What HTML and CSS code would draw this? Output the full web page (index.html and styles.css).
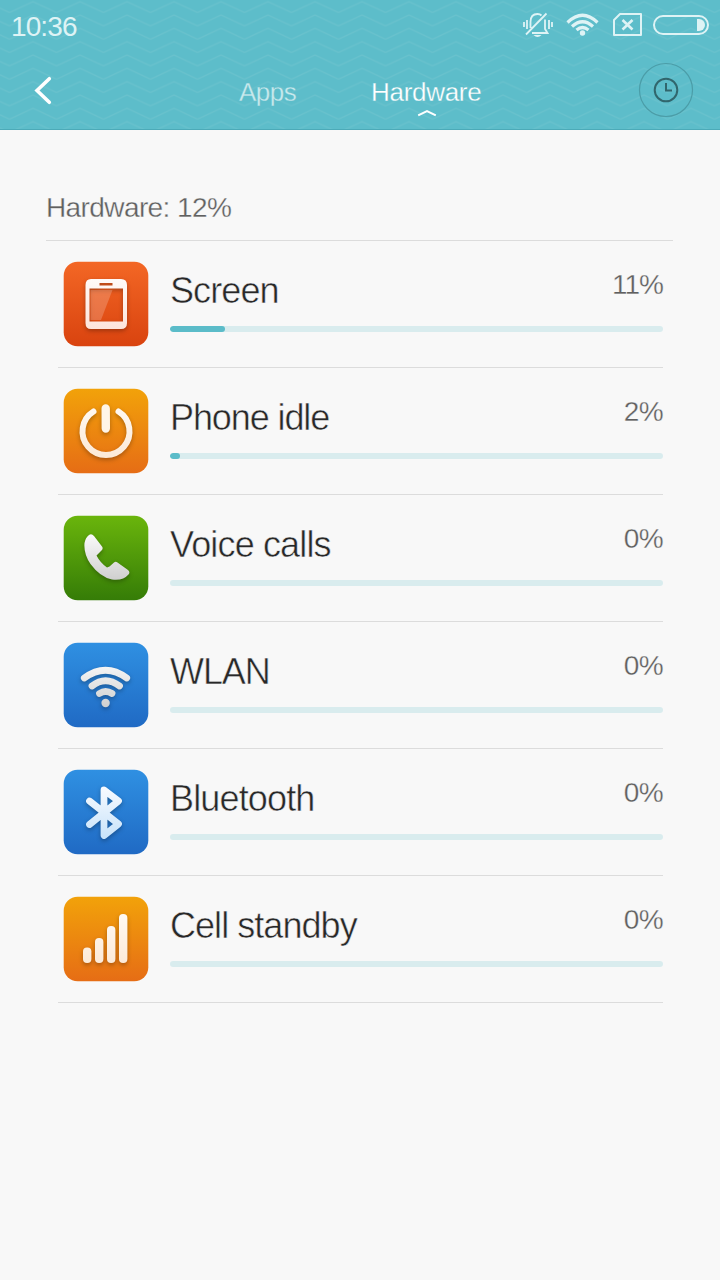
FILE: index.html
```html
<!DOCTYPE html>
<html lang="en">
<head>
<meta charset="utf-8">
<title>Battery usage</title>
<link rel="stylesheet" href="styles.css">
</head>
<body>
<header class="header">
  <svg class="pattern" width="720" height="130" aria-hidden="true">
    <defs>
      <pattern id="waves" x="9.5" y="1.7" width="47" height="13.33" patternUnits="userSpaceOnUse">
        <path d="M0 -2.33L23.5 -13.33L47 -2.33M0 11L23.5 0L47 11M0 24.33L23.5 13.33L47 24.33" fill="none" stroke="#6ac2cd" stroke-width="1.200"/>
      </pattern>
    </defs>
    <rect width="720" height="130" fill="url(#waves)"/>
  </svg>
  <div class="status">
    <span class="time">10:36</span>
    <svg class="status-icons" width="192" height="30" viewBox="520 10 192 30" fill="none" stroke="#def3f5" stroke-width="2">
      <path d="M524 22v5M527 20v9M549 20v9M552 22v5M530.500 28V22C530.500 16 533 14 537.500 14Q540 14 541.500 15.500M545 19.500V29L547.500 33H532M526 34.500L546.500 13.500" stroke-width="1.8"/>
      <path d="M533.500 35h8q-4 3.800-8 0z" fill="#def3f5" stroke="none"/>
      <path d="M567.500 22.500Q582.500 8 597.500 22.500M572 26.500Q582.500 17 593 26.500M576.500 30Q582.500 25 588.500 30" stroke-width="3.200"/>
      <circle cx="582.500" cy="33" r="2.700" fill="#def3f5" stroke="none"/>
      <path d="M620 14H641V35H614V20Z" stroke-linejoin="round"/>
      <path d="M622.500 20L632.500 29.500M632.500 20L622.500 29.500" stroke-width="2.600"/>
      <rect x="654" y="16" width="54" height="18" rx="9"/>
      <path d="M697 19h2a6 6 0 0 1 0 12h-2z" fill="#def3f5" stroke="none"/>
    </svg>
  </div>
  <nav class="nav">
    <svg class="back" width="20" height="30" viewBox="33 75 20 30" fill="none" stroke="#fff" stroke-width="3.600" stroke-linecap="round" stroke-linejoin="miter"><path d="M49.300 78.700L37 90.500L49.300 102.300"/></svg>
    <span class="tab apps">Apps</span>
    <div class="tab-active">
      <span class="tab hardware">Hardware</span>
      <svg class="caret" width="20" height="8" viewBox="0 0 20 8" fill="none" stroke="#fff" stroke-width="2"><path d="M1.200 6.300L10 2L18.800 6.300"/></svg>
    </div>
    <svg class="history" width="56" height="56" viewBox="-28 -28 56 56" fill="none">
      <circle r="26.500" stroke="#4b9da8" stroke-width="1.200"/>
      <circle r="11.300" stroke="#31666d" stroke-width="2"/>
      <path d="M0 -7V.5H6" stroke="#31666d" stroke-width="2"/>
    </svg>
  </nav>
</header>
<main class="content">
  <h1 class="summary">Hardware: 12%</h1>
  <ul class="list">
    <li class="row">
      <svg class="icon" viewBox="0 0 86 86">
        <defs>
          <linearGradient id="red" x2="0" y2="1"><stop stop-color="#f36725"/><stop offset="1" stop-color="#d9430f"/></linearGradient>
          <linearGradient id="orange" x2="0" y2="1"><stop stop-color="#f2a20a"/><stop offset="1" stop-color="#e66d15"/></linearGradient>
          <linearGradient id="green" x2="0" y2="1"><stop stop-color="#6ab50c"/><stop offset="1" stop-color="#357c07"/></linearGradient>
          <linearGradient id="blue" x2="0" y2="1"><stop stop-color="#2f90e2"/><stop offset="1" stop-color="#206ac4"/></linearGradient>
          <linearGradient id="cream" gradientUnits="userSpaceOnUse" x1="0" y1="16" x2="0" y2="70"><stop stop-color="#fffaf4"/><stop offset="1" stop-color="#fce9d6"/></linearGradient>
          <linearGradient id="pink" x2="0" y2="1"><stop stop-color="#fffaf7"/><stop offset="1" stop-color="#fde4dc"/></linearGradient>
          <linearGradient id="silver" gradientUnits="userSpaceOnUse" x1="0" y1="20" x2="0" y2="66"><stop stop-color="#f9f9f9"/><stop offset="1" stop-color="#cecece"/></linearGradient>
          <linearGradient id="ice" gradientUnits="userSpaceOnUse" x1="0" y1="18" x2="0" y2="70"><stop stop-color="#f8fbff"/><stop offset="1" stop-color="#c7e2fa"/></linearGradient>
        </defs>
        <rect x=".7" y=".7" width="84.600" height="84.600" rx="14" fill="url(#red)"/>
        <g class="glyph"><path fill="url(#pink)" fill-rule="evenodd" d="M28 18H58Q64 18 64 24V62Q64 68 58 68H28Q22.500 68 22.500 62V24Q22.500 18 28 18ZM26.500 27.500V60.500H60V27.500ZM36.500 22V24.500H49.500V22Z"/></g>
        <path d="M27.500 29H49.500L38 59H27.500Z" fill="#fff" opacity=".2"/>
      </svg>
      <div class="info"><div class="line"><span class="name screen">Screen</span><span class="percent eleven">11%</span></div><div class="bar"><div class="fill" style="width:55px"></div></div></div>
    </li>
    <li class="row">
      <svg class="icon" viewBox="0 0 86 86">
        <rect x=".7" y=".7" width="84.600" height="84.600" rx="14" fill="url(#orange)"/>
        <g class="glyph" fill="none" stroke="url(#cream)" stroke-linecap="round"><path stroke-width="6" d="M30.500 23.500A23.500 23.500 0 1 0 55.500 23.500"/><path stroke="#fff5e8" stroke-width="8.400" d="M42.700 20.500L42.800 40.500"/></g>
      </svg>
      <div class="info"><div class="line"><span class="name idle">Phone idle</span><span class="percent">2%</span></div><div class="bar"><div class="fill" style="width:10px"></div></div></div>
    </li>
    <li class="row">
      <svg class="icon" viewBox="0 0 86 86">
        <rect x=".7" y=".7" width="84.600" height="84.600" rx="14" fill="url(#green)"/>
        <g class="glyph"><path fill="url(#silver)" d="M26 20Q28.500 18 31 21L39 31.500Q40.500 33.500 38.500 35.500L33.500 40.500Q37 47.500 44 52.500L46.500 51.500L51 47.500Q52.500 46 54.500 47.500L65 55Q67.500 57 65.500 59.500Q60 66 49 64.500Q37 62 27.500 49Q20.500 38.500 21.500 28Q22.500 22.500 26 20Z"/></g>
      </svg>
      <div class="info"><div class="line"><span class="name voice">Voice calls</span><span class="percent">0%</span></div><div class="bar"></div></div>
    </li>
    <li class="row">
      <svg class="icon" viewBox="0 0 86 86">
        <rect x=".7" y=".7" width="84.600" height="84.600" rx="14" fill="url(#blue)"/>
        <g class="glyph"><path fill="none" stroke="url(#silver)" stroke-width="6.800" stroke-linecap="round" d="M21.300 36Q42.500 20.500 63.700 36M29 44Q42.500 33.500 56.500 44M36.500 51.500Q42.500 47.500 49 51.500"/><circle cx="42.600" cy="61" r="4.200" fill="url(#silver)"/></g>
      </svg>
      <div class="info"><div class="line"><span class="name wlan">WLAN</span><span class="percent">0%</span></div><div class="bar"></div></div>
    </li>
    <li class="row">
      <svg class="icon" viewBox="0 0 86 86">
        <rect x=".7" y=".7" width="84.600" height="84.600" rx="14" fill="url(#blue)"/>
        <g class="glyph"><path fill="none" stroke="url(#ice)" stroke-width="6.800" stroke-linecap="round" stroke-linejoin="round" d="M26.500 32L55.500 55L41 66.500V21L55.500 32L26.500 55.500"/></g>
      </svg>
      <div class="info"><div class="line"><span class="name bluetooth">Bluetooth</span><span class="percent">0%</span></div><div class="bar"></div></div>
    </li>
    <li class="row">
      <svg class="icon" viewBox="0 0 86 86">
        <rect x=".7" y=".7" width="84.600" height="84.600" rx="14" fill="url(#orange)"/>
        <g class="glyph" fill="url(#cream)"><rect x="20" y="51.500" width="8.400" height="15.500" rx="4"/><rect x="32" y="42" width="8.400" height="25" rx="4"/><rect x="44" y="30" width="8.400" height="37" rx="4"/><rect x="56" y="18" width="8.400" height="49" rx="4"/></g>
      </svg>
      <div class="info"><div class="line"><span class="name cell">Cell standby</span><span class="percent">0%</span></div><div class="bar"></div></div>
    </li>
  </ul>
</main>
</body>
</html>
```
FILE: styles.css
```css
* { box-sizing: border-box; }
body {
  margin: 0;
  width: 720px;
  height: 1280px;
  overflow: hidden;
  background: #f8f8f8;
  font-family: "Liberation Sans", sans-serif;
}
svg { display: block; flex: none; }
.header {
  position: relative;
  height: 130px;
  background: #5dbdca;
  border-bottom: 1px solid #4caab8;
}
.pattern { position: absolute; top: 0; left: 0; height: 129px; }
.status {
  position: relative;
  display: flex;
  justify-content: space-between;
  height: 50px;
  padding: 10px 8px 0 11px;
}
.time { font-size: 28px; line-height: 33px; color: #def3f5; letter-spacing: -.9px; }
.nav {
  position: relative;
  display: flex;
  height: 79px;
  padding-left: 33px;
}
.back { margin-top: 25px; }
.tab { display: block; font-size: 26px; line-height: 34px; white-space: nowrap; -webkit-text-stroke: .3px #5dbdca; }
.apps { width: 132px; margin: 25px 0 0 186px; color: #c8e9ed; letter-spacing: -.5px; }
.tab-active { width: 112px; margin-top: 25px; color: #fff; }
.hardware { letter-spacing: -.3px; }
.caret { margin: 0 0 0 46px; }
.history { margin: 12px 0 0 155px; }
.content { padding: 58px 47px 0 46px; }
.summary {
  margin: 0;
  height: 53px;
  border-bottom: 1px solid #dcdcdc;
  color: #606060;
  font-size: 28px;
  font-weight: 400;
  line-height: 39px;
  letter-spacing: -.6px;
  -webkit-text-stroke: .3px #f8f8f8;
}
.list { margin: 0; padding: 0 10px 0 12px; list-style: none; }
.row {
  display: flex;
  height: 127px;
  padding: 20px 0 0 5px;
  border-bottom: 1px solid #dcdcdc;
}
.icon { width: 86px; height: 86px; }
.glyph { filter: drop-shadow(0 2px 2px rgb(0 0 0 / 28%)); }
.info { flex: 1; padding-left: 21px; }
.line { display: flex; justify-content: space-between; height: 65px; }
.name {
  font-size: 36px;
  line-height: 60px;
  color: #282828;
  white-space: nowrap;
  -webkit-text-stroke: .5px #f8f8f8;
}
.screen { letter-spacing: -.9px; }
.idle { letter-spacing: -1.1px; }
.voice { letter-spacing: -.85px; }
.wlan { letter-spacing: -1.1px; }
.bluetooth { letter-spacing: -.85px; }
.cell { letter-spacing: -.95px; }
.percent { font-size: 28px; line-height: 48px; color: #606060; letter-spacing: -.6px; margin-right: 0; -webkit-text-stroke: .3px #f8f8f8; }
.eleven { letter-spacing: -1px; font-kerning: normal; }
.bar { height: 6px; border-radius: 3px; background: #d9ecee; overflow: hidden; }
.fill { height: 6px; border-radius: 3px; background: #5bbcc9; }
```
